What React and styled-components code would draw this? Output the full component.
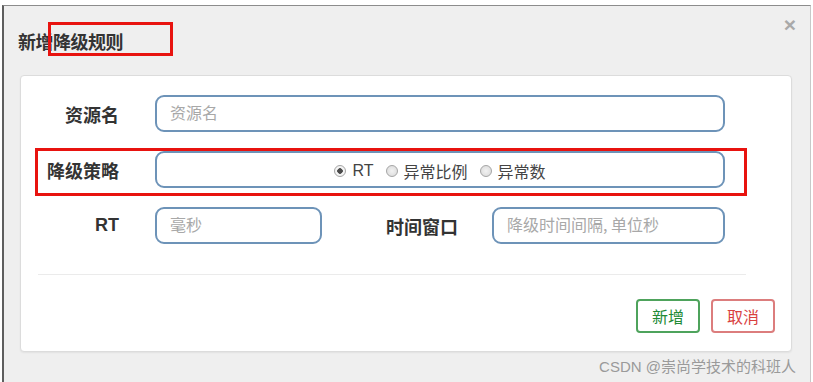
import styled, { createGlobalStyle } from "styled-components";

const GlobalStyle = createGlobalStyle`
  body {
    margin: 0;
    background: #ffffff;
    font-family: "Liberation Sans", "Noto Sans CJK SC", sans-serif;
  }
`;

const Frame = styled.div`
  box-sizing: border-box;
  margin: 5px 0 0 2px;
  width: 809px;
  height: 377px;
  background: #efefef;
  border-left: 2px solid #5e5e5e;
  border-top: 1px solid #8c8c8c;
  border-right: 1px solid #c8c8c8;
  display: flex;
  flex-direction: column;
`;

const Header = styled.div`
  height: 69px;
  display: flex;
  justify-content: space-between;
  align-items: center;
  padding: 0 14px 0 14px;
`;

const Title = styled.div`
  position: relative;
  font-size: 18px;
  font-weight: bold;
  color: #333;
  line-height: 24px;
  font-family: "Noto Sans CJK SC", sans-serif;
  letter-spacing: -0.5px;
`;

const Mark = styled.span`
  position: absolute;
  box-sizing: border-box;
  border: 3px solid #e8130f;
  left: ${(p) => p.$left}px;
  top: ${(p) => p.$top}px;
  width: ${(p) => p.$width}px;
  height: ${(p) => p.$height}px;
  pointer-events: none;
`;

const Close = styled.span`
  align-self: flex-start;
  margin-top: 9px;
  font-size: 21px;
  font-weight: bold;
  color: #a9a9a9;
  line-height: 20px;
  font-family: "Liberation Sans", sans-serif;
`;

const Panel = styled.div`
  margin: 0 18px 0 16px;
  height: 277px;
  box-sizing: border-box;
  background: #ffffff;
  border: 1px solid #dcdcdc;
  border-radius: 4px;
  box-shadow: 0 1px 2px rgba(0, 0, 0, 0.06);
  display: flex;
  flex-direction: column;
`;

const Form = styled.div`
  padding: 19px 66px 0 0;
  display: flex;
  flex-direction: column;
  gap: 19px;
`;

const Row = styled.div`
  position: relative;
  display: grid;
  grid-template-columns: 98px 1fr;
  column-gap: 36px;
  align-items: center;
  height: 37px;
`;

const Label = styled.div`
  text-align: right;
  font-size: 18px;
  font-weight: bold;
  color: #333;
  font-family: "Liberation Sans", "Noto Sans CJK SC", sans-serif;
  width: ${(p) => (p.$width ? `${p.$width}px` : "auto")};
  flex-shrink: 0;
`;

const Input = styled.input`
  box-sizing: border-box;
  height: 37px;
  width: ${(p) => (p.$width ? `${p.$width}px` : "100%")};
  flex: ${(p) => (p.$width ? "none" : "1")};
  margin-left: ${(p) => p.$gap || 0}px;
  border: 2px solid #6d93b8;
  border-radius: 9px;
  padding: 0 13px 4px;
  font-size: 16px;
  font-family: "Noto Sans CJK SC", sans-serif;
  color: #333;
  outline: none;
  &::placeholder {
    color: #a8a8a8;
  }
`;

const RadioBox = styled.div`
  box-sizing: border-box;
  height: 37px;
  border: 2px solid #6d93b8;
  border-radius: 9px;
  display: flex;
  justify-content: center;
  align-items: center;
  gap: 12px;
  padding-top: 2px;
`;

const Option = styled.label`
  display: flex;
  align-items: center;
  gap: 6px;
  font-size: 16px;
  color: #444;
  font-family: "Liberation Sans", "Noto Sans CJK SC", sans-serif;
`;

const Dot = styled.span`
  box-sizing: border-box;
  width: 12px;
  height: 12px;
  border-radius: 50%;
  border: 1px solid #a5a5a5;
  background: radial-gradient(circle, ${(p) => (p.$checked ? "#4a4a4a 0 2.5px, #f4f4f4 3px" : "#f2f2f2 0, #d8d8d8 100%")});
`;

const Pair = styled.div`
  display: flex;
  align-items: center;
`;

const Divider = styled.div`
  margin: 30px 45px 0 17px;
  height: 1px;
  background: #ebebeb;
`;

const Actions = styled.div`
  display: flex;
  justify-content: flex-end;
  gap: 11px;
  padding: 24px 16px 0 0;
`;

const Button = styled.button`
  box-sizing: border-box;
  width: 64px;
  height: 34px;
  background: #fff;
  border: 2px solid ${(p) => p.$border};
  border-radius: 4px;
  color: ${(p) => p.$color};
  font-size: 16px;
  font-family: "Noto Sans CJK SC", sans-serif;
  padding: 0;
`;

const Watermark = styled.div`
  text-align: right;
  padding: 3px 14px 0 0;
  font-size: 15px;
  color: #9a9a9a;
  font-family: "Liberation Sans", "Noto Sans CJK SC", sans-serif;
`;

function App() {
  return (
    <>
      <GlobalStyle />
      <Frame>
        <Header>
          <Title>
            新增降级规则
            <Mark $left={30} $top={-7} $width={125} $height={34} />
          </Title>
          <Close>×</Close>
        </Header>
        <Panel>
          <Form>
            <Row>
              <Label>资源名</Label>
              <Input placeholder="资源名" />
            </Row>
            <Row>
              <Label>降级策略</Label>
              <RadioBox>
                <Option>
                  <Dot $checked /> RT
                </Option>
                <Option>
                  <Dot /> 异常比例
                </Option>
                <Option>
                  <Dot /> 异常数
                </Option>
              </RadioBox>
              <Mark $left={14} $top={-3} $width={712} $height={48} />
            </Row>
            <Row>
              <Label>RT</Label>
              <Pair>
                <Input $width={167} placeholder="毫秒" />
                <Label $width={136}>时间窗口</Label>
                <Input $gap={34} placeholder="降级时间间隔, 单位秒" />
              </Pair>
            </Row>
          </Form>
          <Divider />
          <Actions>
            <Button $border="#4ea35c" $color="#218a35">新增</Button>
            <Button $border="#dc7d7d" $color="#d9413f">取消</Button>
          </Actions>
        </Panel>
        <Watermark>CSDN @崇尚学技术的科班人</Watermark>
      </Frame>
    </>
  );
}

export default App;
